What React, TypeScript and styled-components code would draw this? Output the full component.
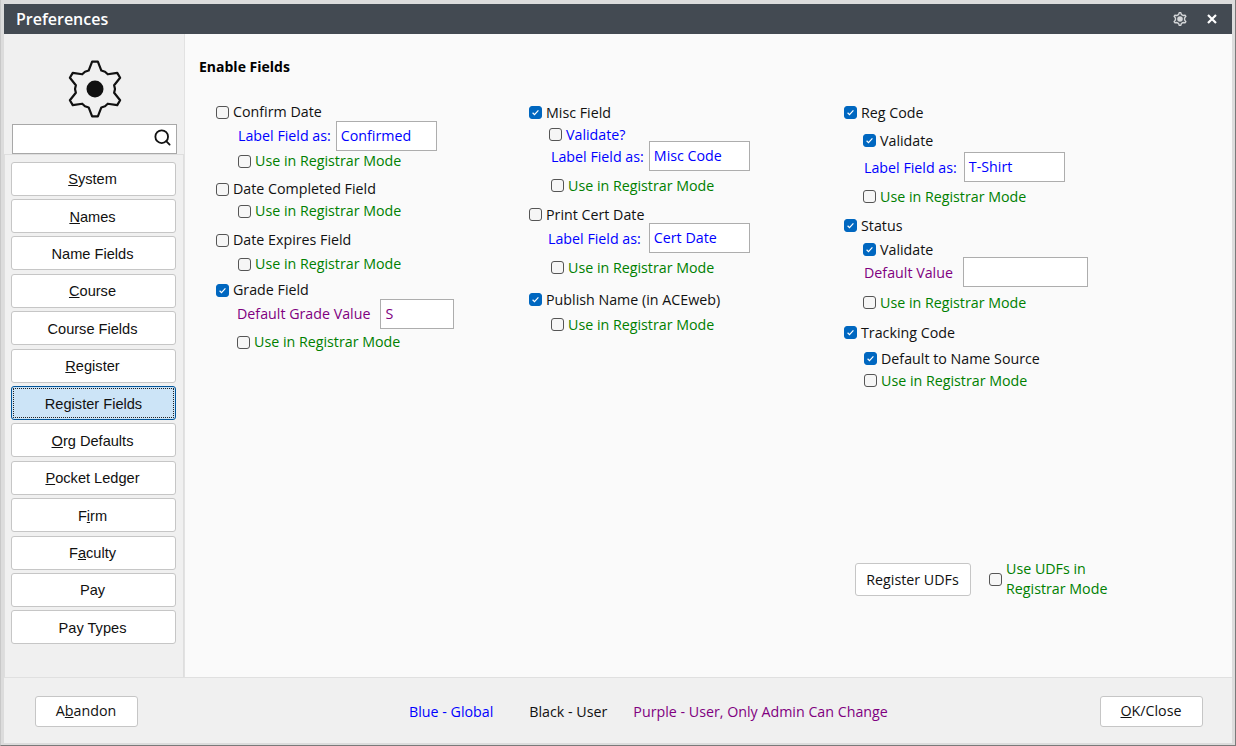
import React from "react";
import styled, { createGlobalStyle } from "styled-components";
import { Search } from "lucide-react";

const Global = createGlobalStyle`
  html, body { margin: 0; padding: 0; background: #e4e4e4; }
  * { box-sizing: border-box; }
`;

const UI = `"Open Sans", "Noto Sans", sans-serif`;
const BLUE = "#0000ff";
const GREEN = "#008000";
const PURPLE = "#800080";

const Frame = styled.div`
  width: 1236px;
  height: 746px;
  padding: 4px 3px 2px 3px;
  background: #dcdcdc;
  border-left: 1px solid #c8c8c8;
  border-right: 1px solid #7a7a7a;
  border-bottom: 1px solid #7a7a7a;
  display: flex;
  flex-direction: column;
  font-family: ${UI};
  overflow: hidden;
`;
const TitleBar = styled.header`
  height: 30px;
  flex: none;
  background: #434a52;
  display: flex;
  align-items: center;
  padding: 0 15px 0 12px;
  color: #fff;
`;
const Title = styled.h1`
  margin: 0;
  font-size: 16px;
  font-weight: 600;
  flex: 1;
`;
const TitleIcons = styled.div`
  display: flex;
  align-items: center;
  gap: 20px;
`;
const Body = styled.div`
  flex: 1;
  display: flex;
  min-height: 0;
`;
const Sidebar = styled.aside`
  width: 181px;
  flex: none;
  background: #f0f0f0;
  display: flex;
  flex-direction: column;
  border-right: 1px solid #e2e2e2;
`;
const LogoBox = styled.div`
  height: 90px;
  flex: none;
  display: flex;
  align-items: flex-start;
  justify-content: center;
  padding: 25px 0 0 1px;
`;
const SearchBox = styled.div`
  height: 30px;
  margin: 0 7px 0 8px;
  flex: none;
  background: #fff;
  border: 1px solid #a8a8a8;
  display: flex;
  align-items: center;
  justify-content: flex-end;
  padding: 0 4px 3px 0;
`;
const NavPanel = styled.nav`
  flex: 1;
  border-top: 1px solid #dedede;
  border-right: 1px solid #dedede;
  border-left: 1px solid #dedede;
  padding: 6.7px 6px 0 6px;
  display: flex;
  flex-direction: column;
  gap: 3.4px;
`;
const NavButton = styled.button<{ $active?: boolean }>`
  height: 34px;
  flex: none;
  width: 165px;
  border-radius: 3px;
  font-family: "Liberation Sans", Arial, sans-serif;
  font-size: 14.6px;
  color: #111;
  padding: ${(p) => (p.$active ? "1px 0 0 0" : "1px 2px 0 0")};
  background: ${(p) => (p.$active ? "#cce4f7" : "#fff")};
  border: 1px solid ${(p) => (p.$active ? "#005499" : "#c6c6c6")};
  ${(p) =>
    p.$active
      ? "outline: 1px dotted #222; outline-offset: -3px; border-width: 1.5px;"
      : ""}
`;
const Main = styled.main`
  flex: 1;
  background: #fafafa;
  padding: 24px 0 0 14px;
  min-width: 0;
`;
const Heading = styled.h2`
  margin: 0;
  font-size: 14px;
  line-height: 18px;
  font-weight: 700;
  color: #000;
`;
const Columns = styled.div`
  display: grid;
  grid-template-columns: 313px 315px 1fr;
  padding: 27px 0 0 17px;
`;
const Label = styled.span<{ $color?: string; $gap?: number }>`
  font-size: 14.25px;
  line-height: 18px;
  white-space: nowrap;
  color: ${(p) => p.$color ?? "#111"};
  margin-left: ${(p) => p.$gap ?? 0}px;
`;
const Column = styled.div<{ $low?: boolean }>`
  display: flex;
  flex-direction: column;
  ${Label} {
    padding-top: ${(p) => (p.$low ? 1 : 0)}px;
  }
`;
const Row = styled.div<{ $mt?: number; $ml?: number; $tall?: boolean }>`
  display: flex;
  align-items: center;
  height: ${(p) => (p.$tall ? 30 : 18)}px;
  margin-top: ${(p) => p.$mt ?? 0}px;
  margin-left: ${(p) => p.$ml ?? 0}px;
  flex: none;
`;
const Box = styled.span<{ $on?: boolean }>`
  width: 13px;
  height: 13px;
  flex: none;
  border-radius: 3px;
  border: 1px solid ${(p) => (p.$on ? "#0067c0" : "#555")};
  background: ${(p) => (p.$on ? "#0067c0" : "#f6f6f6")};
  display: inline-flex;
  align-items: center;
  justify-content: center;
`;
const FieldInput = styled.div<{ $w: number; $gap: number; $color: string }>`
  width: ${(p) => p.$w}px;
  height: 30px;
  margin-left: ${(p) => p.$gap}px;
  border: 1px solid #adadad;
  background: #fff;
  padding: 0 4px;
  font-size: 14.25px;
  line-height: 27px;
  color: ${(p) => p.$color};
`;
const UdfRow = styled.div`
  display: flex;
  align-items: center;
  margin: 174px 0 0 11px;
  height: 33px;
`;
const UdfButton = styled.button`
  width: 116px;
  height: 33px;
  border: 1px solid #c6c6c6;
  border-radius: 3px;
  background: #fff;
  font-family: ${UI};
  font-size: 14.25px;
  color: #111;
  padding: 0 1px 0 0;
  margin-right: 18px;
`;
const UdfLabel = styled.span`
  font-size: 14.25px;
  line-height: 20px;
  color: ${GREEN};
  margin-left: 4px;
  padding-bottom: 1px;
`;
const Footer = styled.footer`
  height: 66px;
  flex: none;
  background: #f0f0f0;
  border-top: 1px solid #e0e0e0;
  display: flex;
  align-items: center;
  padding: 2px 29px 0 31px;
`;
const FootButton = styled.button`
  width: 103px;
  height: 31px;
  border: 1px solid #c6c6c6;
  border-radius: 3px;
  background: #fff;
  font-family: ${UI};
  font-size: 14.25px;
  color: #111;
  padding: 0 1px 2px 0;
`;
const Legend = styled.div`
  display: flex;
  margin-left: 271px;
  flex: 1;
`;
const LegendItem = styled.span<{ $color: string; $ml?: number }>`
  font-size: 14.25px;
  color: ${(p) => p.$color};
  margin-left: ${(p) => p.$ml ?? 0}px;
  white-space: nowrap;
`;

const gearPath = (() => {
  const pts: string[] = [];
  const P = (r: number, a: number) => {
    const t = (a * Math.PI) / 180;
    return `${(30 + r * Math.cos(t)).toFixed(2)} ${(30 + r * Math.sin(t)).toFixed(2)}`;
  };
  for (let i = 0; i < 6; i++) {
    const a = -90 + i * 60;
    pts.push(P(19.5, a - 19), P(27.5, a - 6), P(27.5, a + 6), P(19.5, a + 19));
    pts.push(P(20, a + 30));
  }
  return "M" + pts.join("L") + "Z";
})();

const Gear = ({ size, color, fill, sw, hole }: { size: number; color: string; fill: string; sw: number; hole: number }) => (
  <svg width={size} height={size} viewBox="0 0 60 60">
    <path d={gearPath} fill={fill} stroke={color} strokeWidth={sw} strokeLinejoin="round" />
    <circle cx="30" cy="30" r={hole} fill={color} />
  </svg>
);

const Check = ({ on }: { on?: boolean }) => (
  <Box $on={on}>
    {on && (
      <svg width="9" height="9" viewBox="0 0 9 9">
        <path d="M1.6 4.8 3.5 6.6 7.4 2.4" fill="none" stroke="#fff" strokeWidth="1.2" />
      </svg>
    )}
  </Box>
);

type Spec = {
  t?: string;
  on?: boolean;
  noBox?: boolean;
  color?: string;
  mt?: number;
  ml?: number;
  input?: { w: number; gap: number; v: string; color: string };
};

const reg = (mt: number, ml: number): Spec => ({ t: "Use in Registrar Mode", color: GREEN, mt, ml });

const col1: Spec[] = [
  { t: "Confirm Date" },
  { t: "Label Field as:", noBox: true, color: BLUE, ml: 22, input: { w: 101, gap: 5, v: "Confirmed", color: BLUE } },
  reg(1, 22),
  { t: "Date Completed Field", mt: 10 },
  reg(4, 22),
  { t: "Date Expires Field", mt: 11 },
  reg(6, 22),
  { t: "Grade Field", on: true, mt: 8 },
  { t: "Default Grade Value", noBox: true, color: PURPLE, ml: 21, input: { w: 74, gap: 10, v: "S", color: PURPLE } },
  reg(4, 21),
];
const col2: Spec[] = [
  { t: "Misc Field", on: true },
  { t: "Validate?", color: BLUE, ml: 20, mt: 4 },
  { t: "Label Field as:", noBox: true, color: BLUE, ml: 22, mt: -2, input: { w: 101, gap: 5, v: "Misc Code", color: BLUE } },
  reg(5, 22),
  { t: "Print Cert Date", mt: 11 },
  { t: "Label Field as:", noBox: true, color: BLUE, ml: 19, input: { w: 101, gap: 8, v: "Cert Date", color: BLUE } },
  reg(5, 22),
  { t: "Publish Name (in ACEweb)", on: true, mt: 14 },
  reg(7, 22),
];
const col3: Spec[] = [
  { t: "Reg Code", on: true },
  { t: "Validate", on: true, ml: 19, mt: 10 },
  { t: "Label Field as:", noBox: true, color: BLUE, ml: 20, mt: 3, input: { w: 101, gap: 7, v: "T-Shirt", color: BLUE } },
  reg(5, 19),
  { t: "Status", on: true, mt: 11 },
  { t: "Validate", on: true, ml: 19, mt: 6 },
  { t: "Default Value", noBox: true, color: PURPLE, ml: 20, mt: -1, input: { w: 125, gap: 10, v: "", color: PURPLE } },
  reg(6, 19),
  { t: "Tracking Code", on: true, mt: 12 },
  { t: "Default to Name Source", on: true, ml: 20, mt: 8 },
  reg(4, 20),
];

const renderRows = (rows: Spec[]) =>
  rows.map((r, i) => (
    <Row key={i} $mt={r.mt} $ml={r.ml} $tall={!!r.input}>
      {!r.noBox && <Check on={r.on} />}
      <Label $color={r.color} $gap={r.noBox ? 0 : 4}>
        {r.t}
      </Label>
      {r.input && (
        <FieldInput $w={r.input.w} $gap={r.input.gap} $color={r.input.color}>
          {r.input.v}
        </FieldInput>
      )}
    </Row>
  ));

const nav: [string, string, string][] = [
  ["", "S", "ystem"],
  ["", "N", "ames"],
  ["Name Fields", "", ""],
  ["", "C", "ourse"],
  ["Course Fields", "", ""],
  ["", "R", "egister"],
  ["Register Fields", "", ""],
  ["", "O", "rg Defaults"],
  ["", "P", "ocket Ledger"],
  ["F", "i", "rm"],
  ["F", "a", "culty"],
  ["Pay", "", ""],
  ["Pay Types", "", ""],
];

export default function App() {
  return (
    <Frame>
      <Global />
      <TitleBar>
        <Title>Preferences</Title>
        <TitleIcons>
          <Gear size={14} color="#d4d6d8" fill="#434a52" sw={6} hole={12} />
          <svg width="10" height="10" viewBox="0 0 10 10">
            <path d="M1 1 9 9M9 1 1 9" stroke="#fff" strokeWidth="2.2" />
          </svg>
        </TitleIcons>
      </TitleBar>
      <Body>
        <Sidebar>
          <LogoBox>
            <Gear size={60} color="#111" fill="#f0f0f0" sw={2.2} hole={8.5} />
          </LogoBox>
          <SearchBox>
            <Search size={19} color="#111" strokeWidth={2.3} />
          </SearchBox>
          <NavPanel>
            {nav.map(([a, b, c]) => (
              <NavButton key={a + b + c} $active={a === "Register Fields"}>
                {a}
                {b && <u>{b}</u>}
                {c}
              </NavButton>
            ))}
          </NavPanel>
        </Sidebar>
        <Main>
          <Heading>Enable Fields</Heading>
          <Columns>
            <Column>{renderRows(col1)}</Column>
            <Column $low>{renderRows(col2)}</Column>
            <Column $low>
              {renderRows(col3)}
              <UdfRow>
                <UdfButton>Register UDFs</UdfButton>
                <Check />
                <UdfLabel>
                  Use UDFs in
                  <br />
                  Registrar Mode
                </UdfLabel>
              </UdfRow>
            </Column>
          </Columns>
        </Main>
      </Body>
      <Footer>
        <FootButton>
          A<u>b</u>andon
        </FootButton>
        <Legend>
          <LegendItem $color={BLUE}>Blue - Global</LegendItem>
          <LegendItem $color="#111" $ml={36}>Black - User</LegendItem>
          <LegendItem $color={PURPLE} $ml={26}>Purple - User, Only Admin Can Change</LegendItem>
        </Legend>
        <FootButton>
          <u>O</u>K/Close
        </FootButton>
      </Footer>
    </Frame>
  );
}
